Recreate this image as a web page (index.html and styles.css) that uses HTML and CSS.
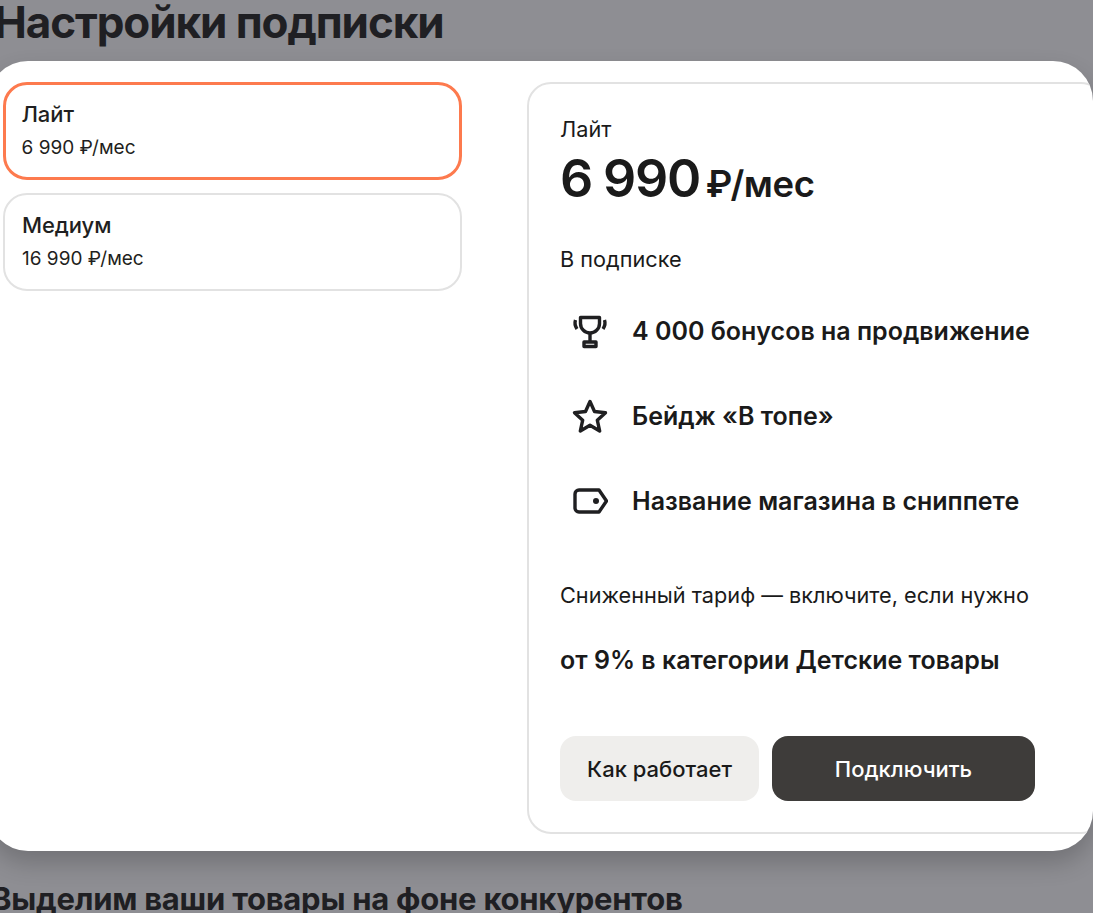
FILE: index.html
```html
<!DOCTYPE html>
<html lang="ru">
<head>
<meta charset="utf-8">
<title>Настройки подписки</title>
<link rel="stylesheet" href="styles.css">
</head>
<body>
<div class="page">
  <h1 class="title">Настройки подписки</h1>
  <section class="modal">
    <div class="plans">
      <div class="plan plan-active">
        <div class="plan-name">Лайт</div>
        <div class="plan-price">6 990 ₽/мес</div>
      </div>
      <div class="plan">
        <div class="plan-name">Медиум</div>
        <div class="plan-price">16 990 ₽/мес</div>
      </div>
    </div>
    <div class="detail">
      <div class="detail-name">Лайт</div>
      <div class="detail-price"><span class="price-num">6 990</span> <span class="price-unit">₽/мес</span></div>
      <div class="detail-label">В подписке</div>
      <ul class="features">
        <li class="feature">
          <svg class="icon" viewBox="0 0 36 36" fill="none" stroke="#1f1f21" stroke-width="3.400" stroke-linejoin="round">
            <path d="M8.500 4.500h19v6c0 5.500-4.500 9.500-9.500 9.500s-9.500-4-9.500-9.500z"/>
            <path d="M18 20v9"/>
            <path d="M12 29h12v4.500h-12z"/>
            <path d="M3.500 7c-1 3-.5 6 1.500 9M32.500 7c1 3 .5 6-1.500 9"/>
          </svg>
          <span>4 000 бонусов на продвижение</span>
        </li>
        <li class="feature">
          <svg class="icon" viewBox="0 0 36 36" fill="none" stroke="#1f1f21" stroke-width="3.400" stroke-linejoin="round">
            <path d="M18 3.500l4.500 10 11 1.200-8.200 7.500 2.400 10.800-9.700-5.700-9.700 5.700 2.400-10.800-8.200-7.500 11-1.200z"/>
          </svg>
          <span>Бейдж «В топе»</span>
        </li>
        <li class="feature">
          <svg class="icon" viewBox="0 0 36 36" fill="none" stroke="#1f1f21" stroke-width="3.400" stroke-linejoin="round">
            <path d="M7 7h20l7.500 11-7.500 11h-20a4 4 0 0 1-4-4v-14a4 4 0 0 1 4-4z"/>
            <circle cx="24" cy="18" r="3" fill="#1f1f21" stroke="none"/>
          </svg>
          <span>Название магазина в сниппете</span>
        </li>
      </ul>
      <div class="tariff-label">Сниженный тариф — включите, если нужно</div>
      <div class="tariff-value">от 9% в категории Детские товары</div>
      <div class="actions">
        <button class="btn btn-light">Как работает</button>
        <button class="btn btn-dark">Подключить</button>
      </div>
    </div>
  </section>
  <h2 class="subtitle">Выделим ваши товары на фоне конкурентов</h2>
</div>
</body>
</html>
```
FILE: styles.css
```css
* { box-sizing: border-box; }
html, body { margin: 0; height: 100%; overflow: hidden; }
body {
  background: #8e8e93;
  color: #1f1f21;
  font-family: Inter, "Noto Sans", sans-serif;
}
.page { width: 1105px; margin-left: -12px; }
.title {
  margin: 0 0 0 6px;
  height: 61px;
  font-size: 44px;
  line-height: 45px;
  font-weight: 700;
  letter-spacing: -1.100px;
  white-space: nowrap;
  color: #1f1f23;
}
.modal {
  display: flex;
  height: 790px;
  padding: 21px 0 17px 15px;
  background: #fff;
  border-radius: 40px;
  box-shadow: 0 12px 24px rgba(0, 0, 0, 0.2);
  overflow: hidden;
}
.plans {
  width: 459px;
  flex: none;
  display: flex;
  flex-direction: column;
  gap: 13px;
}
.plan {
  height: 98px;
  padding: 17px 17px 0;
  border: 2px solid #e2e2e2;
  border-radius: 24px;
}
.plan-active {
  border: 3.500px solid #fd7a4e;
  padding: 15.500px 15.500px 0;
}
.plan-name {
  font-size: 22px;
  line-height: 26px;
  font-weight: 500;
  letter-spacing: -0.1px;
}
.plan-price {
  margin-top: 9px;
  font-size: 19px;
  line-height: 24px;
}
.detail {
  flex: none;
  width: 578px;
  margin-left: 65px;
  padding: 31px 0 0 31px;
  border: 2px solid #e2e2e2;
  border-radius: 24px;
  color: #1a1a1a;
}
.detail-name, .detail-label, .tariff-label {
  font-size: 21.700px;
  line-height: 28px;
}
.detail-price {
  margin-top: 5px;
  line-height: 62px;
  white-space: nowrap;
  word-spacing: -1px;
}
.price-num { font-size: 52px; font-weight: 600; letter-spacing: -1.200px; }
.price-unit { margin-left: 2px; font-size: 36.500px; font-weight: 600; letter-spacing: -0.4px; }
.detail-label { margin-top: 23px; }
.features {
  list-style: none;
  margin: 38px 0 0;
  padding: 0;
  display: flex;
  flex-direction: column;
  gap: 45px;
}
.feature {
  display: flex;
  align-items: center;
  height: 40px;
  padding-left: 12px;
  font-size: 25px;
  font-weight: 600;
  white-space: nowrap;
}
.icon { width: 36px; height: 36px; flex: none; margin-right: 24px; }
.tariff-label { margin-top: 60px; white-space: nowrap; }
.tariff-value {
  margin-top: 37px;
  font-size: 25px;
  line-height: 28px;
  font-weight: 600;
  white-space: nowrap;
}
.actions { display: flex; gap: 13px; margin-top: 62px; }
.btn {
  height: 65px;
  border: 0;
  border-radius: 16px;
  font-family: inherit;
  font-size: 22px;
  font-weight: 500;
}
.btn-light { width: 199px; background: #efeeec; color: #1a1a1a; }
.btn-dark { width: 263px; background: #3e3c3a; color: #fff; }
.subtitle {
  margin: 30px 0 0 3px;
  font-size: 31px;
  line-height: 36px;
  font-weight: 700;
  letter-spacing: -0.25px;
  white-space: nowrap;
  color: #1f1f23;
}
```
